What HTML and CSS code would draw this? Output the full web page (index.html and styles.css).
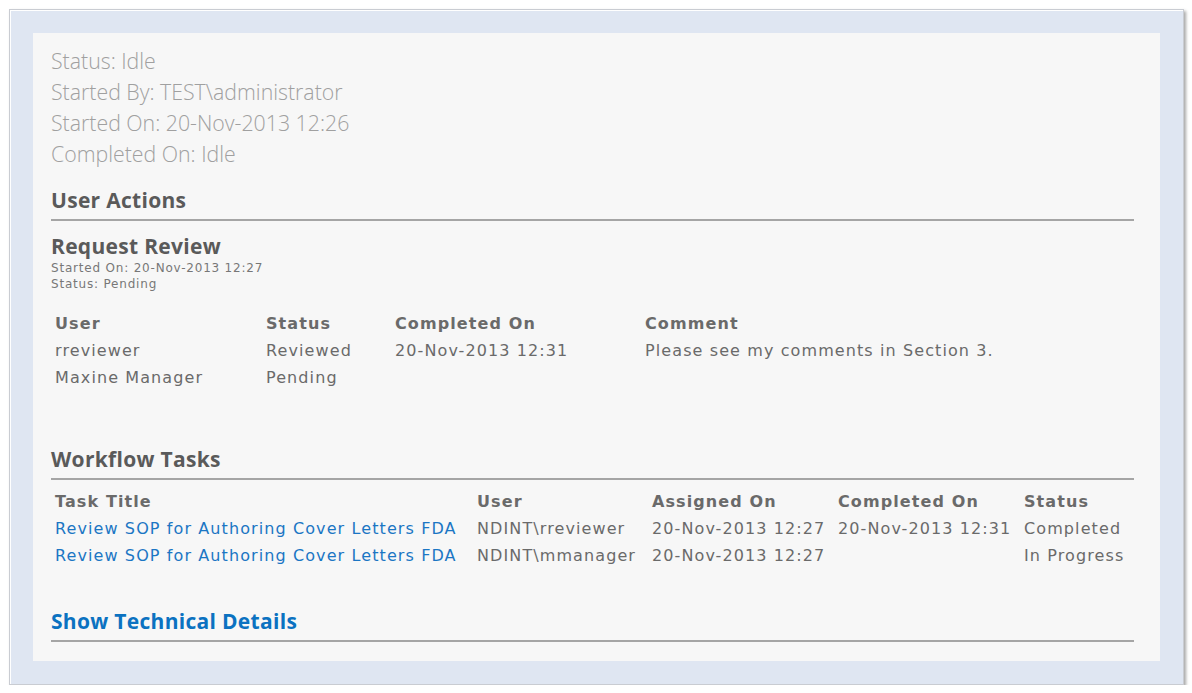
FILE: index.html
```html
<!DOCTYPE html>
<html>
<head>
<meta charset="utf-8">
<link rel="stylesheet" href="styles.css">
</head>
<body>
<div class="frame">
  <div class="panel">
    <div class="info">
      <div>Status: Idle</div>
      <div>Started By: TEST\administrator</div>
      <div>Started On: 20-Nov-2013 12:26</div>
      <div>Completed On: Idle</div>
    </div>
    <h2 class="section first">User Actions</h2>
    <h3 class="action-title">Request Review</h3>
    <div class="meta">
      <div>Started On: 20-Nov-2013 12:27</div>
      <div>Status: Pending</div>
    </div>
    <table class="grid actions">
      <colgroup><col class="c1"><col class="c2"><col class="c3"><col class="c4"></colgroup>
      <tr><th>User</th><th>Status</th><th>Completed On</th><th>Comment</th></tr>
      <tr><td>rreviewer</td><td>Reviewed</td><td>20-Nov-2013 12:31</td><td>Please see my comments in Section 3.</td></tr>
      <tr><td>Maxine Manager</td><td>Pending</td><td></td><td></td></tr>
    </table>
    <h2 class="section tasks-head">Workflow Tasks</h2>
    <table class="grid tasks">
      <colgroup><col class="t1"><col class="t2"><col class="t3"><col class="t4"><col class="t5"></colgroup>
      <tr><th>Task Title</th><th>User</th><th>Assigned On</th><th>Completed On</th><th>Status</th></tr>
      <tr><td><a href="#">Review SOP for Authoring Cover Letters FDA</a></td><td>NDINT\rreviewer</td><td>20-Nov-2013 12:27</td><td>20-Nov-2013 12:31</td><td>Completed</td></tr>
      <tr><td><a href="#">Review SOP for Authoring Cover Letters FDA</a></td><td>NDINT\mmanager</td><td>20-Nov-2013 12:27</td><td></td><td>In Progress</td></tr>
    </table>
    <h2 class="section tech"><a href="#">Show Technical Details</a></h2>
  </div>
</div>
</body>
</html>
```
FILE: styles.css
```css
html, body {
  margin: 0;
  padding: 0;
  background: #ffffff;
}
body {
  padding: 9px 0 0 9px;
}
.frame {
  width: 1127px;
  height: 628px;
  padding: 23px;
  background: #dfe6f2;
  border: 1px solid #c9ccd2;
  box-shadow: inset 1px 1px 0 #ffffff, 2px 2px 3px rgba(0,0,0,0.35);
}
.panel {
  box-sizing: border-box;
  width: 1127px;
  height: 628px;
  background: #f7f7f7;
  padding: 12px 26px 0 18px;
  font-family: "DejaVu Sans", Verdana, sans-serif;
  color: #666;
}
.info {
  font-family: "Open Sans", "Segoe UI", sans-serif;
  font-weight: 300;
  font-size: 21.3px;
  line-height: 31px;
  color: #a0a0a0;
}
.section {
  margin: 0;
  font-family: "Open Sans", "Segoe UI", sans-serif;
  font-weight: 700;
  font-size: 21px;
  letter-spacing: 0.3px;
  line-height: 28px;
  color: #5a5a5a;
  padding: 4px 0 5px;
  border-bottom: 2px solid #a5a5a5;
}
.section.first {
  padding-top: 17px;
}
.action-title {
  margin: 11px 0 0;
  font-family: "Open Sans", "Segoe UI", sans-serif;
  font-weight: 700;
  font-size: 21px;
  letter-spacing: 0.3px;
  line-height: 28px;
  color: #5a5a5a;
}
.meta {
  font-size: 12px;
  letter-spacing: 0.8px;
  line-height: 16px;
  color: #777;
}
.grid {
  border-collapse: collapse;
  table-layout: fixed;
  font-size: 16px;
  letter-spacing: 1.1px;
  line-height: 27px;
  color: #6a6a6a;
}
.grid th {
  text-align: left;
  font-weight: 700;
  color: #6a6a6a;
  padding: 0 0 0 4px;
}
.grid td {
  padding: 0 0 0 4px;
  white-space: nowrap;
}
.grid a {
  color: #1b76c4;
  text-decoration: none;
}
.actions {
  margin-top: 18px;
  width: 800px;
}
.c1 { width: 211px; }
.c2 { width: 129px; }
.c3 { width: 250px; }
.c4 { width: 210px; }
.tasks-head {
  margin-top: 50px;
}
.tasks {
  margin-top: 8px;
  width: 1083px;
}
.t1 { width: 422px; }
.t2 { width: 175px; }
.t3 { width: 186px; }
.t4 { width: 186px; }
.t5 { width: 114px; }
.tech {
  margin-top: 34px;
}
.tech a {
  color: #0b72c1;
  text-decoration: none;
}
```
